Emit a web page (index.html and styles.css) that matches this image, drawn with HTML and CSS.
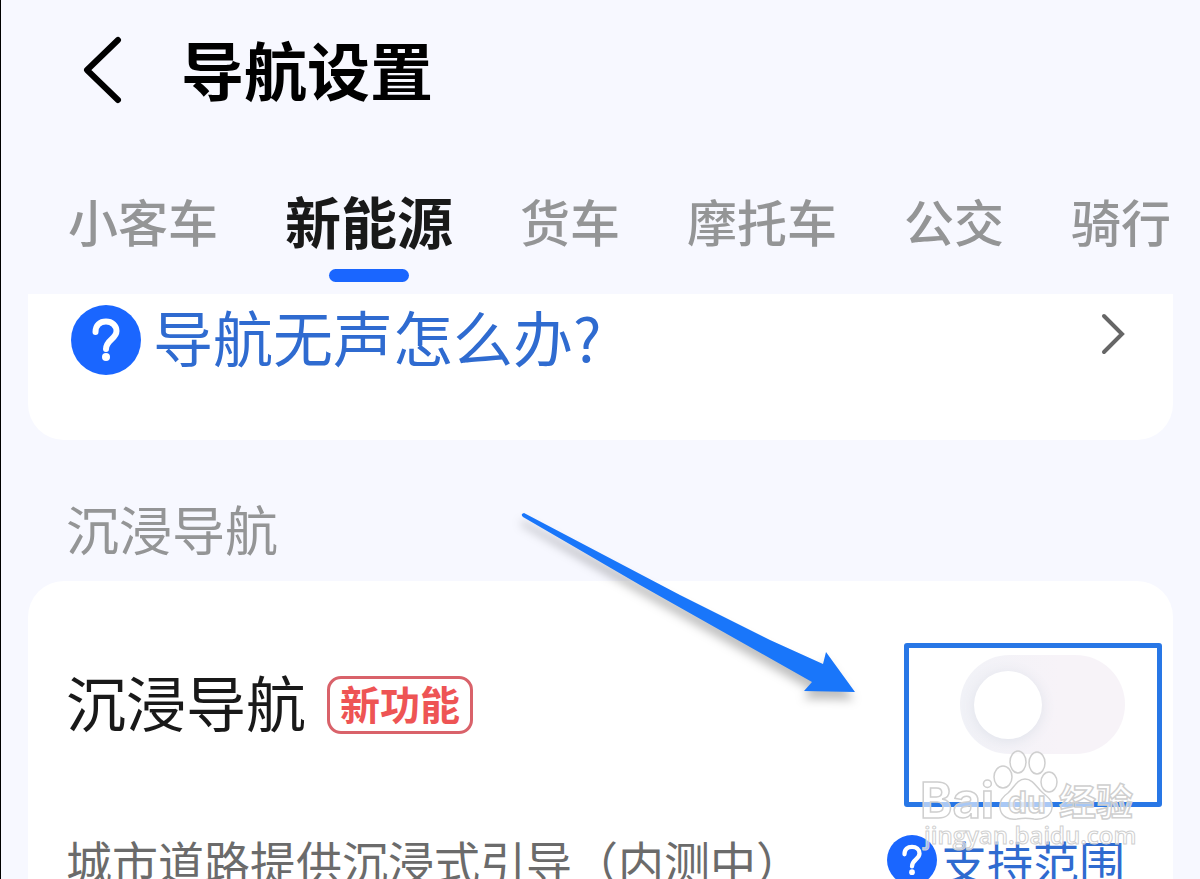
FILE: index.html
```
<!DOCTYPE html>
<html lang="zh-CN">
<head>
    <meta charset="UTF-8">
    <meta name="viewport" content="width=device-width, initial-scale=1">
    <title>导航设置</title>
    <link rel="stylesheet" href="styles.css">
</head>
<body>
    <header class="cabecera">
        <button class="volver" type="button" aria-label="返回">
            <svg width="40" height="68" viewBox="0 0 40 68">
                <path d="M36 4 L5 34 L36 64" fill="none" stroke="#000" stroke-width="6" stroke-linecap="round" stroke-linejoin="round"/>
            </svg>
        </button>
        <h1 class="titulo">导航设置</h1>
    </header>

    <nav class="tabs">
        <a class="tab" href="#">小客车</a>
        <a class="tab activo" href="#">新能源</a>
        <a class="tab" href="#">货车</a>
        <a class="tab" href="#">摩托车</a>
        <a class="tab" href="#">公交</a>
        <a class="tab" href="#">骑行</a>
    </nav>

    <main class="contenido">
        <section class="tarjeta ayuda">
            <a class="enlaceAyuda" href="#">
                <svg class="icono" viewBox="0 0 70 70">
                    <circle cx="35" cy="35" r="35" fill="#1a66ff"/>
                    <path d="M24.500 27 C24.500 20 29 16.500 35 16.500 C41 16.500 45.500 20.500 45.500 26 C45.500 34 35 34.500 35 44" fill="none" stroke="#fff" stroke-width="6" stroke-linecap="round"/>
                    <circle cx="35" cy="52" r="4" fill="#fff"/>
                </svg>
                <span class="textoAyuda">导航无声怎么办?</span>
                <svg class="flecha" width="24" height="42" viewBox="0 0 24 42">
                    <path d="M3 3 L21 21 L3 39" fill="none" stroke="#666" stroke-width="4" stroke-linecap="round"/>
                </svg>
            </a>
        </section>

        <h2 class="seccion">沉浸导航</h2>

        <section class="tarjeta inmersiva">
            <div class="fila">
                <label class="nombre" for="inmersion">沉浸导航</label>
                <span class="etiqueta">新功能</span>
                <div class="marco">
                    <input class="interruptor" id="inmersion" type="checkbox">
                    <div class="recuadro"></div>
                </div>
            </div>
            <div class="fila detalle">
                <p class="descripcion">城市道路提供沉浸式引导（内测中）</p>
                <a class="soporte" href="#">
                    <svg class="icono" viewBox="0 0 70 70">
                        <circle cx="35" cy="35" r="35" fill="#1a66ff"/>
                        <path d="M24.500 27 C24.500 20 29 16.500 35 16.500 C41 16.500 45.500 20.500 45.500 26 C45.500 34 35 34.500 35 44" fill="none" stroke="#fff" stroke-width="6" stroke-linecap="round"/>
                        <circle cx="35" cy="52" r="4" fill="#fff"/>
                    </svg>
                    <span>支持范围</span>
                </a>
            </div>

            <!-- flecha que señala el interruptor -->
            <svg class="puntero" width="340" height="200" viewBox="0 0 340 200">
                <path d="M4 2 Q0 3 3 6 L120 74 L292 171 L284 180 L335 181 L306 141 L303 153 L250 129 L160 84 Z" fill="#1976fa"/>
            </svg>

            <!-- marca de agua -->
            <svg class="marca" width="230" height="110" viewBox="0 0 230 110">
                <g class="trazo">
                    <text class="baidu" x="4" y="71">Bai</text>
                    <ellipse cx="87" cy="30" rx="9" ry="11"/>
                    <ellipse cx="102" cy="15" rx="8" ry="11"/>
                    <ellipse cx="121" cy="16" rx="8" ry="11"/>
                    <ellipse cx="133" cy="35" rx="8" ry="10"/>
                    <path d="M109 32 C101 32 98 41 92 46 C86 50 83 54 84 61 C85 70 93 73 101 72 C107 71 112 71 118 72 C127 73 135 69 136 61 C137 54 132 50 127 46 C121 41 117 32 109 32 Z"/>
                    <text class="du" x="92" y="66">du</text>
                    <text class="jingyan" x="143" y="69">经验</text>
                    <text class="dominio" x="8" y="97">jingyan.baidu.com</text>
                </g>
            </svg>
        </section>
    </main>
</body>
</html>
```

FILE: styles.css
```
*{
    box-sizing: border-box;
}
body{
    margin: 0;
    height: 100vh;
    overflow: hidden;
    background-color: #f7f8ff;
    border-left: 1px solid #000;
    font-family: "Noto Sans CJK SC", sans-serif;
}
a{
    color: inherit;
    text-decoration: none;
}
.cabecera{
    display: flex;
    align-items: center;
    gap: 59px;
    height: 140px;
    padding-left: 81px;
}
.volver{
    display: flex;
    padding: 0;
    border: 0;
    background: none;
}
.titulo{
    margin: 0;
    padding-bottom: 4px;
    font-size: 63px;
    line-height: 72px;
    font-weight: 700;
    color: #000;
}
.tabs{
    display: flex;
    align-items: center;
    gap: 67px;
    height: 154px;
    padding: 6px 0 0 67px;
    white-space: nowrap;
}
.tab{
    flex: none;
    position: relative;
    font-size: 50px;
    line-height: 72px;
    font-weight: 500;
    color: #949596;
}
.activo{
    font-size: 56px;
    font-weight: 700;
    color: #191919;
}
.activo::after{
    content: "";
    position: absolute;
    left: 50%;
    bottom: -26px;
    width: 80px;
    height: 13px;
    margin-left: -40px;
    border-radius: 7px;
    background-color: #1a66ff;
}
.contenido{
    padding: 0 27px;
}
.tarjeta{
    padding: 0 48px 0 38px;
    background-color: #fff;
}
.ayuda{
    height: 146px;
    padding-top: 6px;
    border-radius: 0 0 36px 36px;
}
.enlaceAyuda{
    display: flex;
    align-items: center;
    gap: 12px;
    padding-left: 5px;
    color: #2f6bd0;
}
.icono{
    flex: none;
    width: 70px;
    height: 70px;
}
.textoAyuda{
    padding-bottom: 8px;
    font-size: 60px;
    line-height: 72px;
}
.flecha{
    margin-left: auto;
    margin-bottom: 12px;
}
.seccion{
    margin: 0;
    padding: 52px 38px 17px;
    font-size: 53px;
    line-height: 72px;
    font-weight: 400;
    color: #949596;
}
.inmersiva{
    position: relative;
    padding-top: 74px;
    border-radius: 36px 36px 0 0;
}
.fila{
    display: flex;
    align-items: center;
}
.nombre{
    padding-bottom: 8px;
    font-size: 60px;
    line-height: 72px;
    color: #191919;
}
.etiqueta{
    margin-left: 21px;
    padding: 0 10px 4px;
    border: 3px solid #d9626a;
    border-radius: 14px;
    font-size: 40px;
    line-height: 48px;
    font-weight: 700;
    color: #ee5454;
}
.marco{
    position: relative;
    margin-left: auto;
}
.interruptor{
    appearance: none;
    display: block;
    width: 165px;
    height: 99px;
    margin: 0;
    padding: 16px 14px;
    border-radius: 50px;
    background: linear-gradient(90deg, #f1f2f7, #f7f3f8 60%);
}
.interruptor::before{
    content: "";
    display: block;
    width: 68px;
    height: 68px;
    border-radius: 50%;
    background-color: #fff;
    box-shadow: 0 2px 14px #dfe2ea;
}
.recuadro{
    position: absolute;
    top: -12px;
    right: -37px;
    width: 258px;
    height: 164px;
    border: 5px solid #2877e6;
    border-radius: 3px;
    pointer-events: none;
}
.detalle{
    justify-content: space-between;
    padding-top: 70px;
    white-space: nowrap;
}
.descripcion{
    margin: 0;
    font-size: 46px;
    line-height: 72px;
    color: #6b6b6b;
}
.soporte{
    display: flex;
    align-items: center;
    gap: 4px;
    font-size: 46px;
    line-height: 72px;
    color: #2f6bd0;
}
.soporte .icono{
    width: 50px;
    height: 50px;
}
.puntero{
    position: absolute;
    top: -70px;
    right: 313px;
    filter: drop-shadow(-1px 8px 5px rgba(0, 0, 0, 0.25));
    pointer-events: none;
}
.marca{
    position: absolute;
    top: 166px;
    right: 27px;
    pointer-events: none;
}
.trazo{
    fill: rgba(255, 255, 255, 0.6);
    stroke: #cfcfcf;
    stroke-width: 1.5;
}
.baidu{
    font: 700 49px Inter, sans-serif;
}
.du{
    font: 700 30px Inter, sans-serif;
}
.jingyan{
    font: 700 37px "Noto Sans CJK SC", sans-serif;
}
.dominio{
    stroke-width: 1;
    font: 600 24px "Open Sans", sans-serif;
}
```
